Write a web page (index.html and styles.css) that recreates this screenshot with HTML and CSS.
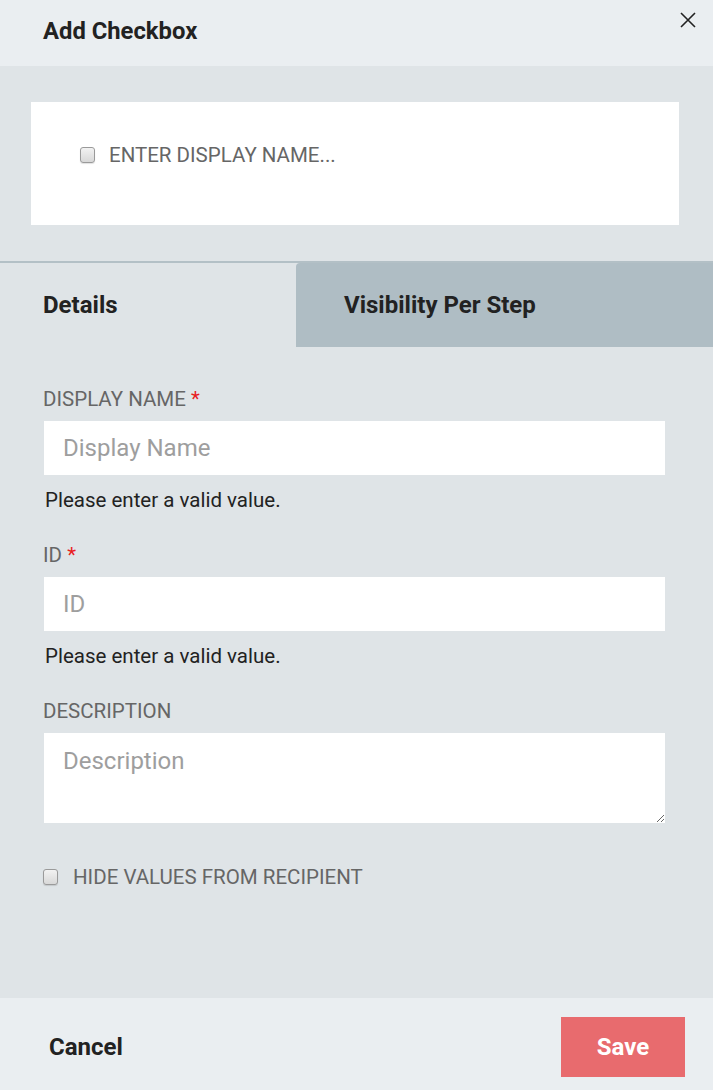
FILE: index.html
```html
<!DOCTYPE html>
<html>
<head>
<meta charset="utf-8">
<link rel="stylesheet" href="styles.css">
</head>
<body>
<div class="modal">
  <div class="header">
    <h1 class="title">Add Checkbox</h1>
    <button class="close" aria-label="Close">
      <svg width="16" height="16" viewBox="0 0 16 16"><path d="M1 1 L15 15 M15 1 L1 15" stroke="#222" stroke-width="1.6" fill="none"/></svg>
    </button>
  </div>
  <div class="preview-wrap">
    <div class="preview">
      <span class="cb"></span>
      <span class="preview-text">ENTER DISPLAY NAME...</span>
    </div>
  </div>
  <div class="tabs">
    <div class="tab active">Details</div>
    <div class="tab other">Visibility Per Step</div>
  </div>
  <div class="form">
    <div class="field">
      <label class="label">DISPLAY NAME <span class="req">*</span></label>
      <input class="input" type="text" placeholder="Display Name">
      <div class="error">Please enter a valid value.</div>
    </div>
    <div class="field">
      <label class="label">ID <span class="req">*</span></label>
      <input class="input" type="text" placeholder="ID">
      <div class="error">Please enter a valid value.</div>
    </div>
    <div class="field">
      <label class="label">DESCRIPTION</label>
      <textarea class="textarea" placeholder="Description"></textarea>
    </div>
    <div class="check-row">
      <span class="cb"></span>
      <span class="check-text">HIDE VALUES FROM RECIPIENT</span>
    </div>
  </div>
  <div class="footer">
    <button class="cancel">Cancel</button>
    <button class="save">Save</button>
  </div>
</div>
</body>
</html>
```
FILE: styles.css
```css
* { box-sizing: border-box; }
html, body { margin: 0; padding: 0; }
body {
  font-family: Roboto, "Liberation Sans", sans-serif;
  background: #dfe4e7;
}
.modal {
  width: 713px;
  height: 1090px;
  display: flex;
  flex-direction: column;
  background: #dfe4e7;
}
.header {
  height: 66px;
  background: #eaeef1;
  display: flex;
  justify-content: space-between;
  align-items: flex-start;
  padding: 0 17px 0 43px;
}
.title {
  margin: 0;
  margin-top: 16px;
  font-size: 23.8px;
  font-weight: 700;
  color: #222;
  line-height: 30px;
}
.close {
  margin-top: 12px;
  border: 0;
  background: none;
  padding: 0;
  width: 16px;
  height: 16px;
  display: block;
}
.close svg { display: block; }
.preview-wrap {
  padding: 36px 34px 37px 31px;
}
.preview {
  height: 123px;
  background: #fff;
  display: flex;
  align-items: flex-start;
  padding: 41px 0 0 49px;
  gap: 14px;
}
.cb {
  width: 15px;
  height: 16px;
  border: 1px solid #9a9a9a;
  border-radius: 3px;
  background: linear-gradient(#f2f2f2, #d8d8d8);
  box-shadow: 0 1px 1px rgba(0,0,0,0.12);
  flex: none;
  margin-top: 4px;
}
.preview-text {
  font-size: 20.5px;
  color: #666;
  line-height: 24px;
}
.tabs {
  display: flex;
  border-top: 2px solid #b3c0c6;
  height: 86px;
  margin-top: -1px;
}
.tab {
  font-size: 24px;
  font-weight: 700;
  color: #222;
  display: flex;
  align-items: center;
}
.tab.active {
  width: 296px;
  padding-left: 43px;
}
.tab.other {
  flex: 1;
  background: #afbdc4;
  padding-left: 48px;
  border-top-left-radius: 4px;
}
.form {
  flex: 1;
  padding: 40px 48px 0 44px;
}
.field {
  display: flex;
  flex-direction: column;
  margin-bottom: 31px;
}
.label {
  font-size: 20.5px;
  color: #666;
  line-height: 24px;
  margin-left: -1px;
}
.req { color: #e8201f; }
.input {
  margin-top: 10px;
  height: 54px;
  border: 0;
  background: #fff;
  font-family: inherit;
  font-size: 24px;
  padding: 0 19px;
  outline: none;
}
.input::placeholder, .textarea::placeholder { color: #9e9e9e; }
.error {
  margin-top: 13px;
  font-size: 20.5px;
  color: #222;
  line-height: 24px;
  margin-left: 1px;
}
.textarea {
  margin-top: 10px;
  height: 90px;
  border: 0;
  background: #fff;
  font-family: inherit;
  font-size: 24px;
  line-height: 28px;
  padding: 14px 19px;
  outline: none;
  resize: vertical;
}
.check-row {
  display: flex;
  align-items: flex-start;
  gap: 15px;
  margin-top: 42px;
  margin-left: -1px;
}
.check-text {
  font-size: 20.5px;
  color: #666;
  line-height: 24px;
}
.footer {
  height: 92px;
  background: #eaeef1;
  display: flex;
  justify-content: space-between;
  align-items: center;
  padding: 6px 28px 0 49px;
}
.cancel {
  border: 0;
  background: none;
  padding: 0;
  font-family: inherit;
  font-size: 24px;
  font-weight: 700;
  color: #222;
}
.save {
  width: 124px;
  height: 60px;
  border: 0;
  background: #e86b6e;
  color: #fff;
  font-family: inherit;
  font-size: 24px;
  font-weight: 700;
}
```
